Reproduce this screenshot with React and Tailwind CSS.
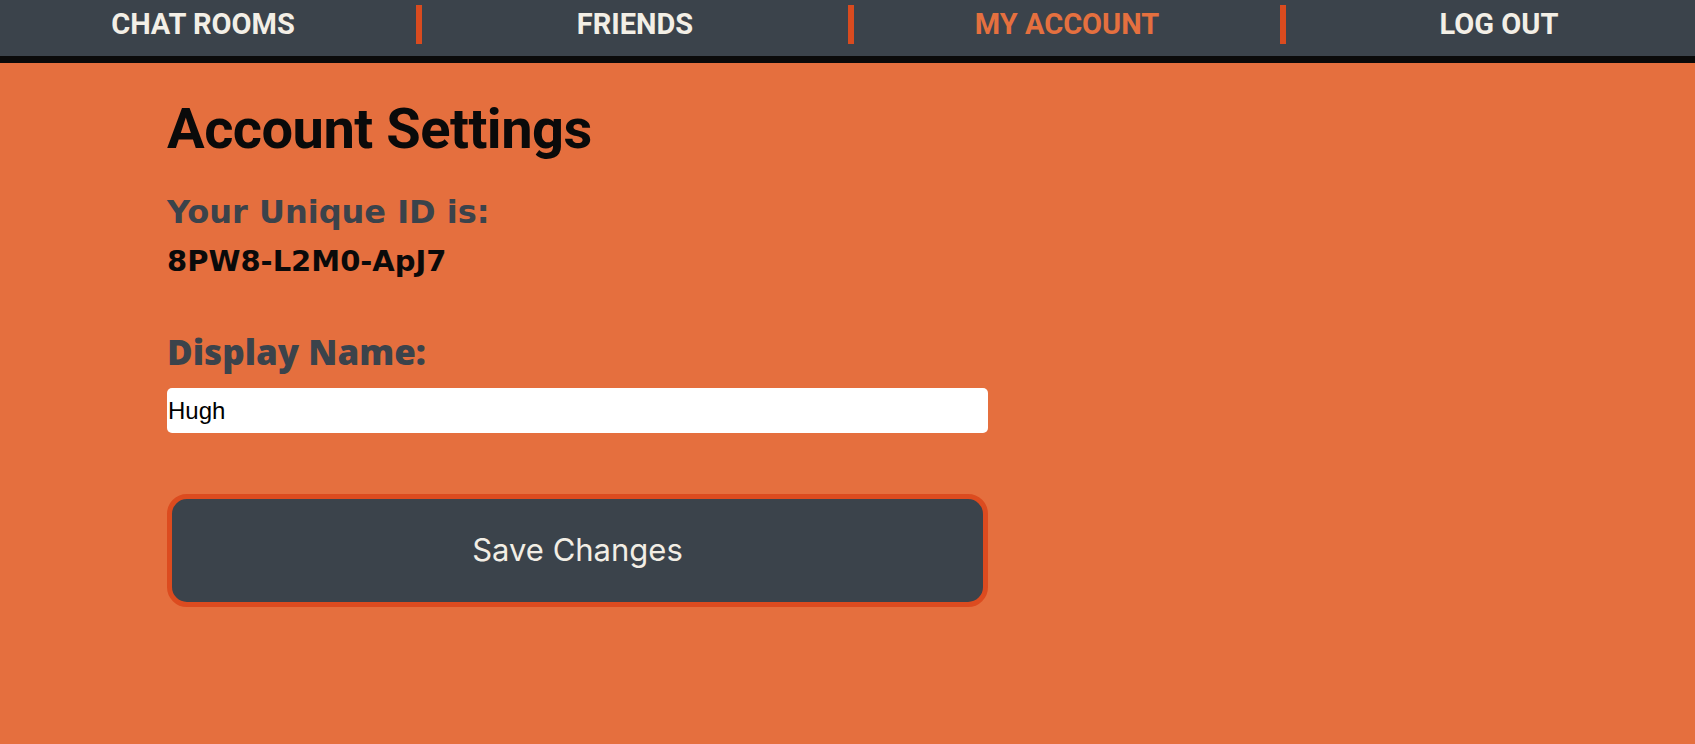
import React, { useState } from 'react';

const navItems = [
  { label: 'CHAT ROOMS', width: 'w-[416px] pr-[10px]' },
  { label: 'FRIENDS', width: 'w-[426px]' },
  { label: 'MY ACCOUNT', width: 'w-[426px]', active: true },
  { label: 'LOG OUT', width: 'w-[426px]' },
];

const NavBar = () => (
  <nav className="bg-[#3b434b] border-b-[7px] border-[#0a0a0a] overflow-hidden">
    <div className="flex items-center h-[49px] mb-[7px]">
      {navItems.map((item, i) => (
        <React.Fragment key={item.label}>
          <div className={`${item.width} flex-none flex justify-center`}>
            <span
              className={`font-['Roboto',sans-serif] font-bold text-[29px] leading-none ${
                item.active ? 'text-[#e5703f]' : 'text-[#f3efe6]'
              }`}
            >
              {item.label}
            </span>
          </div>
          {i < navItems.length - 1 && (
            <div className="w-[6px] h-[39px] flex-none bg-[#d94b1f]" />
          )}
        </React.Fragment>
      ))}
    </div>
  </nav>
);

const App = () => {
  const [displayName, setDisplayName] = useState('Hugh');

  return (
    <div className="min-h-screen bg-[#e56f3e]">
      <NavBar />

      {/* Account settings */}
      <main className="pl-[167px] pt-[38px] pb-10">
        <h1 className="font-['Roboto',sans-serif] font-bold text-[56px] leading-none tracking-[-0.5px] text-[#0a0a0a]">
          Account Settings
        </h1>

        <h2 className="mt-[39px] font-['DejaVu_Sans',sans-serif] font-bold text-[32px] leading-none text-[#3b434b]">
          Your Unique ID is:
        </h2>
        <p className="mt-[19px] font-['DejaVu_Sans',sans-serif] font-bold text-[29px] leading-none text-[#0a0a0a]">
          8PW8-L2M0-ApJ7
        </p>

        <label
          htmlFor="display-name"
          className="block mt-[58px] font-['Open_Sans',sans-serif] font-extrabold text-[35px] leading-none text-[#3b434b]"
        >
          Display Name:
        </label>
        <input
          id="display-name"
          type="text"
          value={displayName}
          onChange={(e) => setDisplayName(e.target.value)}
          className="block mt-[19px] w-[821px] h-[45px] pl-[1px] rounded-[5px] bg-white text-black font-['Liberation_Sans',Arial,sans-serif] text-[24px] outline-none"
        />

        <button
          type="button"
          className="block mt-[61px] w-[821px] h-[113px] border-[5px] border-[#dc4b1f] rounded-[20px] bg-[#3b434b] text-[#f2eee5] font-['Inter',sans-serif] text-[31px]"
        >
          Save Changes
        </button>
      </main>
    </div>
  );
};

export default App;
